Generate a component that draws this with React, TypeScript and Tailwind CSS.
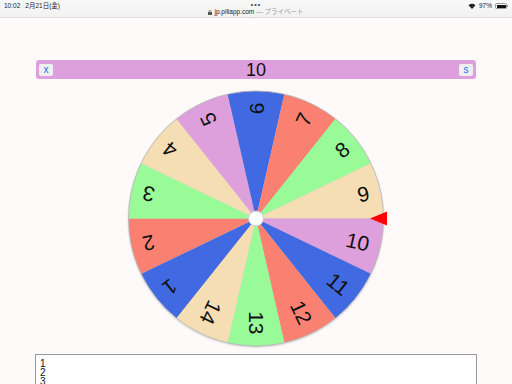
import React from "react";

const COLORS = ["#4169e1", "#fa8072", "#98fb98", "#f5deb3", "#dda0dd"];
const COUNT = 14;
const SELECTED = 10;
const CX = 140;
const CY = 134.5;
const R = 127.5;

function rad(deg: number) {
  return (deg * Math.PI) / 180;
}

function Wheel() {
  const step = 360 / COUNT;
  const items = Array.from({ length: COUNT }, (_, i) => {
    const label = i + 1;
    const start = (label - SELECTED) * step;
    const end = start + step;
    const x1 = CX + R * Math.cos(rad(start));
    const y1 = CY + R * Math.sin(rad(start));
    const x2 = CX + R * Math.cos(rad(end));
    const y2 = CY + R * Math.sin(rad(end));
    return {
      label,
      mid: start + step / 2,
      color: COLORS[i % COLORS.length],
      d: `M${CX} ${CY} L${x1} ${y1} A${R} ${R} 0 0 1 ${x2} ${y2} Z`,
    };
  });

  return (
    <svg width="280" height="268" viewBox="0 0 280 268" className="block mx-auto">
      <defs>
        <filter id="sh" x="-10%" y="-10%" width="120%" height="120%">
          <feDropShadow dx="0" dy="1" stdDeviation="1" floodColor="#000" floodOpacity="0.25" />
        </filter>
      </defs>
      <circle cx={CX} cy={CY} r={R} fill="#ccc" filter="url(#sh)" />
      {items.map((s) => (
        <path key={s.label} d={s.d} fill={s.color} />
      ))}
      <circle cx={CX} cy={CY} r={R} fill="none" stroke="#b5b5b5" strokeWidth="0.8" />
      {items.map((s) => (
        <text
          key={`t${s.label}`}
          transform={`translate(${CX} ${CY}) rotate(${s.mid}) translate(116 0)`}
          textAnchor="end"
          dominantBaseline="central"
          fontSize="21"
          fill="#111"
          fontFamily="'Liberation Sans', Arial, sans-serif"
        >
          {s.label}
        </text>
      ))}
      <circle cx={CX} cy={CY} r="7.5" fill="#fff" stroke="#c8c8c8" strokeWidth="1" />
      <polygon points={`${CX + 114},${CY} ${CX + 131},${CY - 7} ${CX + 131},${CY + 7}`} fill="#ff0000" />
    </svg>
  );
}

function StatusBar() {
  return (
    <div className="relative h-[18px] bg-gradient-to-b from-[#f9f9f9] to-[#f1f1f1] border-b border-[#dcdcdc] text-[6.5px] leading-none text-[#222] font-['Liberation_Sans','Noto_Sans_CJK_JP',sans-serif]">
      <div className="absolute left-[4px] top-[3px] flex gap-[5px]">
        <span>10:02</span>
        <span>2月21日(金)</span>
      </div>
      <div className="flex flex-col items-center pt-[1px]">
        <span className="text-[7px] tracking-[1px] text-[#444] leading-[7px]">•••</span>
        <div className="flex items-center gap-[2px] mt-[1px]">
          <svg width="4" height="5" viewBox="0 0 4 5">
            <rect x="0" y="2" width="4" height="3" fill="#555" />
            <path d="M1 2V1.2a1 1 0 0 1 2 0V2" fill="none" stroke="#555" strokeWidth="0.6" />
          </svg>
          <span>jp.piliapp.com</span>
          <span className="text-[#999]">— プライベート</span>
        </div>
      </div>
      <div className="absolute right-[4px] top-[3px] flex items-center gap-[3px]">
        <svg width="8" height="6" viewBox="0 0 8 6">
          <path d="M4 6 L0.5 2.2 A5 5 0 0 1 7.5 2.2 Z" fill="#222" />
        </svg>
        <span>97%</span>
        <div className="flex items-center">
          <div className="w-[12px] h-[6px] rounded-[1.5px] border border-[#999] p-[0.5px]">
            <div className="h-full w-full bg-[#111] rounded-[0.5px]" />
          </div>
          <div className="w-[1px] h-[2px] bg-[#999]" />
        </div>
      </div>
    </div>
  );
}

export default function App() {
  return (
    <div className="w-[512px] h-[384px] overflow-hidden bg-[#fffafa] font-['Liberation_Sans',Arial,sans-serif]">
      <StatusBar />
      <div className="mt-[42px] mx-[36px] h-[19px] rounded-[3px] bg-[#dda0dd] flex items-center justify-between px-[3px]">
        <button className="w-[14px] h-[12px] rounded-[2px] bg-[#efefef] text-[#1a6ff0] text-[10px] leading-none flex items-center justify-center">
          x
        </button>
        <span className="text-[18px] leading-none text-[#111]">10</span>
        <button className="w-[14px] h-[12px] rounded-[2px] bg-[#efefef] text-[#1a6ff0] text-[10px] leading-none flex items-center justify-center">
          s
        </button>
      </div>
      <div className="mt-[5px]">
        <Wheel />
      </div>
      <div className="mt-[2px] mx-[35px] h-[60px] bg-white border border-[#9a9a9a] px-[4px] pt-[4px] text-[10px] leading-[9px] text-[#111] whitespace-pre">
        {"1\n2\n3\n4\n5"}
      </div>
    </div>
  );
}
